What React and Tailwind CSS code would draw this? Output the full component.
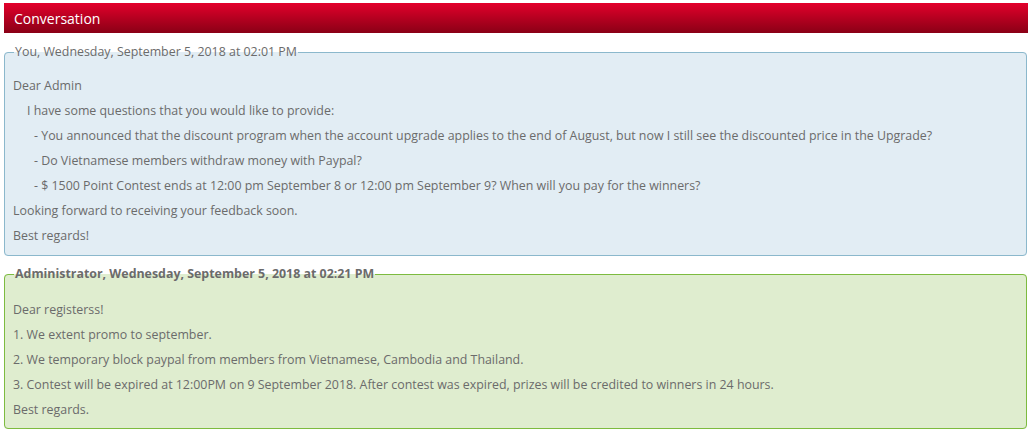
const you = [
  { text: "Dear Admin", indent: "" },
  { text: "I have some questions that you would like to provide:", indent: "pl-[14px]" },
  {
    text: "- You announced that the discount program when the account upgrade applies to the end of August, but now I still see the discounted price in the Upgrade?",
    indent: "pl-[21px]",
  },
  { text: "- Do Vietnamese members withdraw money with Paypal?", indent: "pl-[21px]" },
  {
    text: "- $ 1500 Point Contest ends at 12:00 pm September 8 or 12:00 pm September 9? When will you pay for the winners?",
    indent: "pl-[21px]",
  },
  { text: "Looking forward to receiving your feedback soon.", indent: "" },
  { text: "Best regards!", indent: "" },
];

const admin = [
  "Dear registerss!",
  "1. We extent promo to september.",
  "2. We temporary block paypal from members from Vietnamese, Cambodia and Thailand.",
  "3. Contest will be expired at 12:00PM on 9 September 2018. After contest was expired, prizes will be credited to winners in 24 hours.",
  "Best regards.",
];

export default function App() {
  return (
    <div className="min-h-[431px] bg-white pl-[4px] pr-[1px] pt-[3px] font-['Open_Sans',sans-serif] text-[12.4px] text-[#6b6b6b]">
      <div className="flex h-[30px] items-center bg-gradient-to-b from-[#e3002b] to-[#8a0016] px-[10px] text-[14px] text-white">
        Conversation
      </div>

      <fieldset className="mr-[1px] mt-[10px] rounded-[4px] border border-[#8bb8cc] bg-[#e2edf4] px-[8px] pb-[7px] pt-[12px]">
        <legend className="ml-[1px] px-[1px] text-[12.4px] leading-[18px]">
          You, Wednesday, September 5, 2018 at 02:01 PM
        </legend>
        {you.map((l, i) => (
          <p key={i} className={`leading-[25px] ${l.indent}`}>
            {l.text}
          </p>
        ))}
      </fieldset>

      <fieldset className="mr-[1px] mt-[9px] rounded-[4px] border border-[#7dbb3f] bg-[#dfedcf] px-[8px] pb-[6px] pt-[14px]">
        <legend className="ml-[1px] px-[1px] text-[12.4px] font-bold leading-[18px]">
          Administrator, Wednesday, September 5, 2018 at 02:21 PM
        </legend>
        {admin.map((t, i) => (
          <p key={i} className="leading-[25px]">
            {t}
          </p>
        ))}
      </fieldset>
    </div>
  );
}
